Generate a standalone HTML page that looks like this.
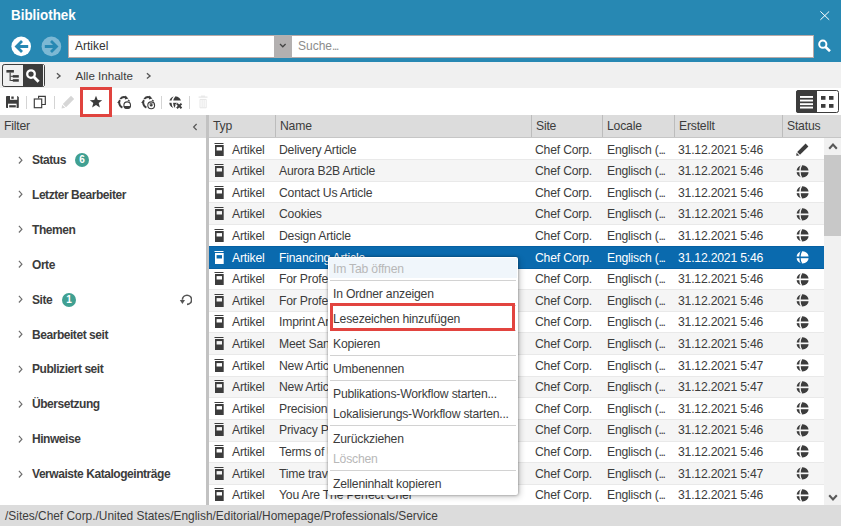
<!DOCTYPE html>
<html><head><meta charset="utf-8">
<style>
*{margin:0;padding:0;box-sizing:border-box}
html,body{width:841px;height:526px;overflow:hidden;background:#fff;font-family:"Liberation Sans",sans-serif;color:#3c3c3c}
.abs{position:absolute}
.ell{letter-spacing:-1.4px}
#hdr{position:absolute;left:0;top:0;width:841px;height:62px;background:#2788b3}
#title{position:absolute;left:11px;top:7px;font-size:13.4px;font-weight:bold;color:#fff;line-height:18px;transform:scaleY(1.07);transform-origin:0 14px}
#bc{position:absolute;left:0;top:62px;width:841px;height:26px;background:#f0f0f0}
#tb{position:absolute;left:0;top:88px;width:841px;height:27px;background:#fff}
#fhdr{position:absolute;left:0;top:115px;width:206px;height:23px;background:#dcdcdc}
#fhdr span{position:absolute;left:4px;top:3.5px;font-size:12.2px;letter-spacing:-0.2px;line-height:14px}
#split{position:absolute;left:206px;top:115px;width:3px;height:390px;background:#c2c2c2}
#ghdr{position:absolute;left:209px;top:115px;width:632px;height:23px;background:#dcdcdc;border-bottom:1px solid #c6c6c6}
.hc{position:absolute;top:0;height:22px;border-left:1px solid #bcbcbc}
.hc span{position:absolute;left:4px;top:3.5px;font-size:12.2px;letter-spacing:-0.2px;line-height:14px}
.row{position:absolute;left:209px;width:615px;height:21.6px;z-index:2}
.rbg{position:absolute;left:209px;width:615px;box-sizing:border-box}
.rsep{position:absolute;left:209px;width:615px;height:1px;background:#e9e9e9}
.c{position:absolute;top:4.5px;font-size:12.2px;letter-spacing:-0.2px;line-height:14px;white-space:nowrap}
.ti{display:block;margin-top:0px}
.gl{display:block;margin-top:0.5px}
.pc{display:block;margin-top:0}
#sb{position:absolute;left:824px;top:138px;width:17px;height:367px;background:#f1f1f1}
#thumb{position:absolute;left:824px;top:155px;width:17px;height:81px;background:#c8c8c8}
#status{position:absolute;left:0;top:505px;width:841px;height:21px;background:#dcdcdc}
#status span{position:absolute;left:5px;top:4px;font-size:11.9px;line-height:14px}
.fi{position:absolute;left:0;width:206px;height:0}
.chev{position:absolute;left:18px;top:-4px}
.fname{position:absolute;left:32px;top:-6.5px;font-size:12px;letter-spacing:-0.45px;font-weight:bold;line-height:14px;white-space:nowrap}
.badge{position:absolute;top:-7px;width:14px;height:14px;border-radius:7px;background:#40a092;color:#fff;font-size:10px;font-weight:bold;line-height:14px;text-align:center}
#menu{position:absolute;z-index:10;left:328px;top:257px;width:190px;height:238px;background:#fff;border-radius:2px;box-shadow:0 0 3px rgba(0,0,0,0.45), 2px 2px 6px rgba(0,0,0,0.18)}
.mi .ell{letter-spacing:-0.3px}
.mi{position:absolute;left:0;width:190px;height:20px;padding-left:5px;padding-top:4px;font-size:12.2px;letter-spacing:-0.2px;line-height:14px;white-space:nowrap}
.msep{position:absolute;left:2px;width:186px;height:1px;background:#d2d2d2}
#redmenu{position:absolute;z-index:11;left:330px;top:303px;width:185px;height:28px;border:3px solid #e2443f}
#redstar{position:absolute;z-index:5;left:80px;top:87px;width:32px;height:30px;border:3px solid #e0433e}
.sep{position:absolute;top:96px;width:1px;height:13px;background:#d4d4d4}
</style></head><body>
<div id="hdr"></div>
<div id="title">Bibliothek</div>
<svg class="abs" style="left:820px;top:10.5px" width="10" height="10" viewBox="0 0 10 10"><path d="M0.4 0.4 L9.2 8.8 M9.2 0.4 L0.4 8.8" stroke="#fff" stroke-width="1"/></svg>
<!-- nav -->
<svg class="abs" style="left:11px;top:36px" width="21" height="21" viewBox="0 0 21 21"><circle cx="10.2" cy="10.4" r="9.8" fill="#fff"/><path d="M17.2 10.5 H5.5 M11 5 L5.5 10.5 L11 16" stroke="#2788b3" stroke-width="2.8" fill="none"/></svg>
<svg class="abs" style="left:41px;top:36px" width="21" height="21" viewBox="0 0 21 21"><circle cx="10.4" cy="10.4" r="9.8" fill="#7db8d4"/><path d="M3.8 10.5 H15.5 M10 5 L15.5 10.5 L10 16" stroke="#2788b3" stroke-width="2.8" fill="none"/></svg>
<div class="abs" style="left:68px;top:35px;width:206px;height:22.5px;background:#fff;border:1px solid #b9aaa8;border-right:none"></div>
<div class="abs" style="left:75px;top:38px;font-size:12px;line-height:16px;color:#333">Artikel</div>
<div class="abs" style="left:274px;top:35px;width:18px;height:22.5px;background:#b3b0b0"></div>
<svg class="abs" style="left:278.5px;top:42.5px" width="8" height="6" viewBox="0 0 8 6"><path d="M1 1 L3.8 3.8 L6.6 1" stroke="#444" stroke-width="1.25" fill="none"/></svg>
<div class="abs" style="left:292px;top:35px;width:522px;height:22.5px;background:#fff;border:1px solid #b9aaa8;border-left:none"></div>
<div class="abs" style="left:298px;top:38px;font-size:12px;line-height:16px;color:#8c8c8c">Suche<span class="ell">...</span></div>
<svg class="abs" style="left:817px;top:39px" width="15" height="13" viewBox="0 0 15 13"><circle cx="5.8" cy="5.2" r="3.6" stroke="#fff" stroke-width="2" fill="none"/><path d="M8.3 7.8 L13 12.2" stroke="#fff" stroke-width="2.6"/></svg>

<div id="bc"></div>
<!-- tree/search toggle -->
<div class="abs" style="left:2px;top:64px;width:43px;height:23px;border:1.1px solid #3c3c3c;border-radius:2.5px;background:#3c3c3c"></div>
<div class="abs" style="left:3.2px;top:65.1px;width:20px;height:20.8px;background:#f0f0f0;border-radius:1.5px 0 0 1.5px"></div>
<div class="abs" style="left:42.5px;top:65px;width:1px;height:21px;background:#f0f0f0"></div>
<svg class="abs" style="left:6px;top:70px" width="14" height="12" viewBox="0 0 14 12"><rect x="0.4" y="0" width="7.5" height="2.6" fill="#3c3c3c"/><rect x="3.6" y="2.5" width="1.1" height="8.5" fill="#3c3c3c"/><rect x="4.5" y="5.8" width="2.5" height="1" fill="#3c3c3c"/><rect x="4.5" y="10" width="2.5" height="1" fill="#3c3c3c"/><rect x="6.8" y="5.1" width="6" height="2.5" fill="#3c3c3c"/><rect x="6.8" y="9.2" width="6" height="2.5" fill="#3c3c3c"/></svg>
<svg class="abs" style="left:25px;top:68px" width="16" height="16" viewBox="0 0 16 16"><circle cx="6" cy="6.1" r="3.8" stroke="#fff" stroke-width="2.3" fill="none"/><path d="M8.7 8.8 L13.6 13.7" stroke="#fff" stroke-width="3"/></svg>
<svg class="abs" style="left:55.5px;top:72px" width="6" height="8" viewBox="0 0 6 8"><path d="M0.9 1.2 L4.1 3.9 L0.9 6.6" stroke="#555" stroke-width="1.3" fill="none"/></svg>
<div class="abs" style="left:75.5px;top:68px;font-size:11.6px;line-height:16px">Alle Inhalte</div>
<svg class="abs" style="left:146px;top:72px" width="6" height="8" viewBox="0 0 6 8"><path d="M0.9 1.2 L4.1 3.9 L0.9 6.6" stroke="#555" stroke-width="1.3" fill="none"/></svg>

<div id="tb"></div>
<!-- save -->
<svg class="abs" style="left:6px;top:96px" width="13" height="12" viewBox="0 0 13 12"><path d="M0.8 0 H11.6 L12.8 1.2 V11.2 Q12.8 12 12 12 H0.8 Q0 12 0 11.2 V0.8 Q0 0 0.8 0 Z" fill="#3c3c3c"/><rect x="4" y="0" width="7.2" height="3.8" fill="#fff"/><rect x="5.3" y="0.5" width="2.4" height="2.3" fill="#3c3c3c"/><rect x="2" y="7.7" width="8.6" height="4.3" fill="#fff"/><rect x="3.2" y="9.2" width="6.6" height="2.2" fill="#3c3c3c"/></svg>
<div class="sep" style="left:26px"></div>
<svg class="abs" style="left:33px;top:95px" width="14" height="14" viewBox="0 0 14 14"><path d="M5.6 3.5 V1.3 H12.3 V9.5 H8.8" stroke="#3c3c3c" stroke-width="1.15" fill="none"/><rect x="1.3" y="4.0" width="7.4" height="8.7" stroke="#3c3c3c" stroke-width="1.15" fill="#fff"/></svg>
<div class="sep" style="left:54px"></div>
<svg class="abs" style="left:61px;top:95px" width="14" height="14" viewBox="0 0 14 14"><path d="M10 0.8 L13.2 4 L5 12.2 L1.8 9 Z" fill="#d6d6d6"/><path d="M1.2 9.8 L4.2 12.8 L0.6 13.4 Z" fill="#d6d6d6"/></svg>
<svg class="abs" style="left:89px;top:95px" width="14" height="14" viewBox="0 0 14 14"><path d="M7 0.8 L8.7 5.0 L13.2 5.2 L9.7 8.1 L10.9 12.6 L7 10.1 L3.1 12.6 L4.3 8.1 L0.8 5.2 L5.3 5.0 Z" fill="#3c3c3c"/></svg>
<!-- sync icons -->
<svg class="abs" style="left:114px;top:93px" width="20" height="18" viewBox="0 0 20 18"><path d="M6.2 6.0 A5.3 5.3 0 0 1 12.3 4.6" stroke="#3c3c3c" stroke-width="1.9" fill="none"/><path d="M11.2 2.6 L14.4 5.4 L10.9 6.6 Z" fill="#3c3c3c"/><path d="M5.9 7.0 A5.4 5.4 0 0 0 8.4 14.6" stroke="#3c3c3c" stroke-width="1.9" fill="none"/><path d="M3.1 9.4 L5.6 7.4 L6.2 11.2 Z" fill="#3c3c3c"/><path d="M13.9 6.9 L15.7 8.2" stroke="#3c3c3c" stroke-width="1.1"/><circle cx="13.2" cy="12.2" r="3.3" stroke="#3c3c3c" stroke-width="1.1" fill="#fff"/><path d="M9.6 12.9 H16.8 A3.7 3.7 0 0 1 9.6 12.9 Z" fill="#3c3c3c"/></svg>
<svg class="abs" style="left:138px;top:93px" width="20" height="18" viewBox="0 0 20 18"><path d="M6.2 6.0 A5.3 5.3 0 0 1 12.3 4.6" stroke="#3c3c3c" stroke-width="1.9" fill="none"/><path d="M11.2 2.6 L14.4 5.4 L10.9 6.6 Z" fill="#3c3c3c"/><path d="M5.9 7.0 A5.4 5.4 0 0 0 8.4 14.6" stroke="#3c3c3c" stroke-width="1.9" fill="none"/><path d="M3.1 9.4 L5.6 7.4 L6.2 11.2 Z" fill="#3c3c3c"/><path d="M13.9 6.9 L15.7 8.2" stroke="#3c3c3c" stroke-width="1.1"/><circle cx="13.2" cy="12.3" r="3.4" stroke="#3c3c3c" stroke-width="1.1" fill="#fff"/><circle cx="13.2" cy="12.3" r="1.3" fill="#3c3c3c"/><path d="M11.4 11.2 A2.1 2.1 0 0 1 15 11.6" stroke="#3c3c3c" stroke-width="0.9" fill="none"/></svg>
<div class="sep" style="left:161px"></div>
<svg class="abs" style="left:165px;top:93px" width="20" height="18" viewBox="0 0 20 18"><circle cx="10.2" cy="9.3" r="6" fill="#3c3c3c"/><rect x="3" y="7.5" width="15" height="2.3" fill="#fff"/><path d="M10 2.4 Q4.2 9.3 10 16.2" stroke="#fff" stroke-width="1.5" fill="none"/><path d="M11.6 10.3 L16.8 15.6 M16.8 10.3 L11.6 15.6" stroke="#fff" stroke-width="4.6"/><rect x="10.2" y="12.8" width="7" height="4" fill="#fff"/><path d="M11.9 10.6 L16.5 15.3 M16.5 10.6 L11.9 15.3" stroke="#3c3c3c" stroke-width="2"/></svg>
<div class="sep" style="left:189px"></div>
<svg class="abs" style="left:197px;top:95px" width="12" height="14" viewBox="0 0 12 14"><rect x="1.6" y="1.5" width="8.9" height="1.2" fill="#e6e6e6"/><rect x="4" y="0.6" width="4" height="1.2" fill="#e6e6e6"/><path d="M3 4.4 H9.2 V12.8 H3 Z M5.1 4.8 V12.4 M7.1 4.8 V12.4" stroke="#e6e6e6" stroke-width="1" fill="none"/></svg>
<!-- view toggle -->
<div class="abs" style="left:796px;top:90px;width:43px;height:23px;border:1.3px solid #3c3c3c;border-radius:2.5px;background:#fff"></div>
<div class="abs" style="left:796px;top:90px;width:21px;height:23px;background:#3c3c3c;border-radius:2.5px 0 0 2.5px"></div>
<svg class="abs" style="left:800px;top:95px" width="14" height="14" viewBox="0 0 14 14"><rect x="0" y="1" width="13" height="1.9" fill="#fff"/><rect x="0" y="4.6" width="13" height="1.9" fill="#fff"/><rect x="0" y="8.2" width="13" height="1.9" fill="#fff"/><rect x="0" y="11.6" width="13" height="1.9" fill="#fff"/></svg>
<svg class="abs" style="left:820px;top:95px" width="15" height="15" viewBox="0 0 15 15"><rect x="1" y="1" width="4.5" height="3.8" fill="#3c3c3c"/><rect x="9" y="1" width="4.5" height="3.8" fill="#3c3c3c"/><rect x="1" y="9" width="4.5" height="3.8" fill="#3c3c3c"/><rect x="9" y="9" width="4.5" height="3.8" fill="#3c3c3c"/></svg>

<div id="redstar"></div>

<div id="fhdr"><span>Filter</span><svg style="position:absolute;left:192px;top:8px" width="6" height="8" viewBox="0 0 6 8"><path d="M4.6 1 L1.6 4 L4.6 7" stroke="#555" stroke-width="1.15" fill="none"/></svg></div>
<div class="fi" style="top:159.5px"><svg class="chev" width="6" height="9" viewBox="0 0 6 9"><path d="M0.9 0.9 L3.9 4.2 L0.9 7.5" stroke="#6e6e6e" stroke-width="1.2" fill="none"/></svg><span class="fname">Status</span><span class="badge" style="left:75px">6</span></div><div class="fi" style="top:194.4px"><svg class="chev" width="6" height="9" viewBox="0 0 6 9"><path d="M0.9 0.9 L3.9 4.2 L0.9 7.5" stroke="#6e6e6e" stroke-width="1.2" fill="none"/></svg><span class="fname">Letzter Bearbeiter</span></div><div class="fi" style="top:229.3px"><svg class="chev" width="6" height="9" viewBox="0 0 6 9"><path d="M0.9 0.9 L3.9 4.2 L0.9 7.5" stroke="#6e6e6e" stroke-width="1.2" fill="none"/></svg><span class="fname">Themen</span></div><div class="fi" style="top:264.2px"><svg class="chev" width="6" height="9" viewBox="0 0 6 9"><path d="M0.9 0.9 L3.9 4.2 L0.9 7.5" stroke="#6e6e6e" stroke-width="1.2" fill="none"/></svg><span class="fname">Orte</span></div><div class="fi" style="top:299.1px"><svg class="chev" width="6" height="9" viewBox="0 0 6 9"><path d="M0.9 0.9 L3.9 4.2 L0.9 7.5" stroke="#6e6e6e" stroke-width="1.2" fill="none"/></svg><span class="fname">Site</span><span class="badge" style="left:62px;top:-6.5px">1</span><svg class="reset" width="16" height="16" viewBox="0 0 16 16" style="position:absolute;left:176px;top:-7px"><path d="M6.4 7.8 A4.6 4.6 0 1 1 11 12.4" stroke="#555" stroke-width="1.6" fill="none"/><path d="M3.8 8.1 L9 8.1 L6.4 11.9 Z" fill="#555"/></svg></div><div class="fi" style="top:334.0px"><svg class="chev" width="6" height="9" viewBox="0 0 6 9"><path d="M0.9 0.9 L3.9 4.2 L0.9 7.5" stroke="#6e6e6e" stroke-width="1.2" fill="none"/></svg><span class="fname">Bearbeitet seit</span></div><div class="fi" style="top:368.9px"><svg class="chev" width="6" height="9" viewBox="0 0 6 9"><path d="M0.9 0.9 L3.9 4.2 L0.9 7.5" stroke="#6e6e6e" stroke-width="1.2" fill="none"/></svg><span class="fname">Publiziert seit</span></div><div class="fi" style="top:403.8px"><svg class="chev" width="6" height="9" viewBox="0 0 6 9"><path d="M0.9 0.9 L3.9 4.2 L0.9 7.5" stroke="#6e6e6e" stroke-width="1.2" fill="none"/></svg><span class="fname">Übersetzung</span></div><div class="fi" style="top:438.7px"><svg class="chev" width="6" height="9" viewBox="0 0 6 9"><path d="M0.9 0.9 L3.9 4.2 L0.9 7.5" stroke="#6e6e6e" stroke-width="1.2" fill="none"/></svg><span class="fname">Hinweise</span></div><div class="fi" style="top:473.6px"><svg class="chev" width="6" height="9" viewBox="0 0 6 9"><path d="M0.9 0.9 L3.9 4.2 L0.9 7.5" stroke="#6e6e6e" stroke-width="1.2" fill="none"/></svg><span class="fname">Verwaiste Katalogeinträge</span></div>
<div id="split"></div>
<div id="ghdr">
<div class="hc" style="left:0;border-left:none"><span>Typ</span></div>
<div class="hc" style="left:66px"><span>Name</span></div>
<div class="hc" style="left:322px"><span>Site</span></div>
<div class="hc" style="left:393px"><span>Locale</span></div>
<div class="hc" style="left:465px"><span>Erstellt</span></div>
<div class="hc" style="left:573px"><span>Status</span></div>
</div>
<div class="rbg" style="top:138px;height:22px;background:#ffffff"></div><div class="rsep" style="top:159px"></div><div class="row" style="top:138.00px;color:#3c3c3c">
<div class="c" style="left:5px"><svg class="ti" width="10" height="14" viewBox="0 0 10 14"><rect x="0.5" y="0" width="9" height="1" fill="#3c3c3c"/><rect x="1" y="2" width="8.7" height="11" fill="#3c3c3c"/><rect x="2.6" y="4.1" width="5.4" height="3.4" fill="#ffffff"/></svg></div>
<div class="c" style="left:23px">Artikel</div>
<div class="c" style="left:70px">Delivery Article</div>
<div class="c" style="left:326px">Chef Corp.</div>
<div class="c" style="left:398px">Englisch (<span class="ell">...</span></div>
<div class="c" style="left:469px">31.12.2021 5:46</div>
<div class="c" style="left:587px"><svg class="pc" width="13" height="13" viewBox="0 0 13 13"><path d="M9.6 0.6 L12.4 3.4 L4 11.8 L1.2 9 Z" fill="#3c3c3c"/><path d="M0.6 9.7 L3.3 12.4 L0.2 12.8 Z" fill="#3c3c3c"/></svg></div>
</div><div class="rbg" style="top:160px;height:22px;background:#f5f5f5"></div><div class="rsep" style="top:181px"></div><div class="row" style="top:159.60px;color:#3c3c3c">
<div class="c" style="left:5px"><svg class="ti" width="10" height="14" viewBox="0 0 10 14"><rect x="0.5" y="0" width="9" height="1" fill="#3c3c3c"/><rect x="1" y="2" width="8.7" height="11" fill="#3c3c3c"/><rect x="2.6" y="4.1" width="5.4" height="3.4" fill="#f5f5f5"/></svg></div>
<div class="c" style="left:23px">Artikel</div>
<div class="c" style="left:70px">Aurora B2B Article</div>
<div class="c" style="left:326px">Chef Corp.</div>
<div class="c" style="left:398px">Englisch (<span class="ell">...</span></div>
<div class="c" style="left:469px">31.12.2021 5:46</div>
<div class="c" style="left:587px"><svg class="gl" width="13" height="13" viewBox="0 0 13 13"><circle cx="6.6" cy="6.4" r="6.05" fill="#3c3c3c"/><rect x="0" y="5.5" width="13" height="1.7" fill="#f5f5f5"/><path d="M5.6 0.1 C3.4 3 3.4 9.8 5.6 12.7" stroke="#f5f5f5" stroke-width="1.4" fill="none"/></svg></div>
</div><div class="rbg" style="top:182px;height:21px;background:#ffffff"></div><div class="rsep" style="top:202px"></div><div class="row" style="top:181.20px;color:#3c3c3c">
<div class="c" style="left:5px"><svg class="ti" width="10" height="14" viewBox="0 0 10 14"><rect x="0.5" y="0" width="9" height="1" fill="#3c3c3c"/><rect x="1" y="2" width="8.7" height="11" fill="#3c3c3c"/><rect x="2.6" y="4.1" width="5.4" height="3.4" fill="#ffffff"/></svg></div>
<div class="c" style="left:23px">Artikel</div>
<div class="c" style="left:70px">Contact Us Article</div>
<div class="c" style="left:326px">Chef Corp.</div>
<div class="c" style="left:398px">Englisch (<span class="ell">...</span></div>
<div class="c" style="left:469px">31.12.2021 5:46</div>
<div class="c" style="left:587px"><svg class="gl" width="13" height="13" viewBox="0 0 13 13"><circle cx="6.6" cy="6.4" r="6.05" fill="#3c3c3c"/><rect x="0" y="5.5" width="13" height="1.7" fill="#ffffff"/><path d="M5.6 0.1 C3.4 3 3.4 9.8 5.6 12.7" stroke="#ffffff" stroke-width="1.4" fill="none"/></svg></div>
</div><div class="rbg" style="top:203px;height:22px;background:#f5f5f5"></div><div class="rsep" style="top:224px"></div><div class="row" style="top:202.80px;color:#3c3c3c">
<div class="c" style="left:5px"><svg class="ti" width="10" height="14" viewBox="0 0 10 14"><rect x="0.5" y="0" width="9" height="1" fill="#3c3c3c"/><rect x="1" y="2" width="8.7" height="11" fill="#3c3c3c"/><rect x="2.6" y="4.1" width="5.4" height="3.4" fill="#f5f5f5"/></svg></div>
<div class="c" style="left:23px">Artikel</div>
<div class="c" style="left:70px">Cookies</div>
<div class="c" style="left:326px">Chef Corp.</div>
<div class="c" style="left:398px">Englisch (<span class="ell">...</span></div>
<div class="c" style="left:469px">31.12.2021 5:46</div>
<div class="c" style="left:587px"><svg class="gl" width="13" height="13" viewBox="0 0 13 13"><circle cx="6.6" cy="6.4" r="6.05" fill="#3c3c3c"/><rect x="0" y="5.5" width="13" height="1.7" fill="#f5f5f5"/><path d="M5.6 0.1 C3.4 3 3.4 9.8 5.6 12.7" stroke="#f5f5f5" stroke-width="1.4" fill="none"/></svg></div>
</div><div class="rbg" style="top:225px;height:22px;background:#ffffff"></div><div class="row" style="top:224.40px;color:#3c3c3c">
<div class="c" style="left:5px"><svg class="ti" width="10" height="14" viewBox="0 0 10 14"><rect x="0.5" y="0" width="9" height="1" fill="#3c3c3c"/><rect x="1" y="2" width="8.7" height="11" fill="#3c3c3c"/><rect x="2.6" y="4.1" width="5.4" height="3.4" fill="#ffffff"/></svg></div>
<div class="c" style="left:23px">Artikel</div>
<div class="c" style="left:70px">Design Article</div>
<div class="c" style="left:326px">Chef Corp.</div>
<div class="c" style="left:398px">Englisch (<span class="ell">...</span></div>
<div class="c" style="left:469px">31.12.2021 5:46</div>
<div class="c" style="left:587px"><svg class="gl" width="13" height="13" viewBox="0 0 13 13"><circle cx="6.6" cy="6.4" r="6.05" fill="#3c3c3c"/><rect x="0" y="5.5" width="13" height="1.7" fill="#ffffff"/><path d="M5.6 0.1 C3.4 3 3.4 9.8 5.6 12.7" stroke="#ffffff" stroke-width="1.4" fill="none"/></svg></div>
</div><div class="rbg" style="top:246px;height:23px;background:#0a6aae;border-top:1px solid #0660a2;border-bottom:1px solid #0660a2;z-index:1"></div><div class="row" style="top:246.00px;color:#ffffff">
<div class="c" style="left:5px"><svg class="ti" width="10" height="14" viewBox="0 0 10 14"><rect x="0.5" y="0" width="9" height="1" fill="#ffffff"/><rect x="1" y="2" width="8.7" height="11" fill="#ffffff"/><rect x="2.6" y="4.1" width="5.4" height="3.4" fill="#0a6aae"/></svg></div>
<div class="c" style="left:23px">Artikel</div>
<div class="c" style="left:70px">Financing Article</div>
<div class="c" style="left:326px">Chef Corp.</div>
<div class="c" style="left:398px">Englisch (<span class="ell">...</span></div>
<div class="c" style="left:469px">31.12.2021 5:46</div>
<div class="c" style="left:587px"><svg class="gl" width="13" height="13" viewBox="0 0 13 13"><circle cx="6.6" cy="6.4" r="6.05" fill="#ffffff"/><rect x="0" y="5.5" width="13" height="1.7" fill="#0a6aae"/><path d="M5.6 0.1 C3.4 3 3.4 9.8 5.6 12.7" stroke="#0a6aae" stroke-width="1.4" fill="none"/></svg></div>
</div><div class="rbg" style="top:268px;height:22px;background:#ffffff"></div><div class="rsep" style="top:289px"></div><div class="row" style="top:267.60px;color:#3c3c3c">
<div class="c" style="left:5px"><svg class="ti" width="10" height="14" viewBox="0 0 10 14"><rect x="0.5" y="0" width="9" height="1" fill="#3c3c3c"/><rect x="1" y="2" width="8.7" height="11" fill="#3c3c3c"/><rect x="2.6" y="4.1" width="5.4" height="3.4" fill="#ffffff"/></svg></div>
<div class="c" style="left:23px">Artikel</div>
<div class="c" style="left:70px">For Professionals</div>
<div class="c" style="left:326px">Chef Corp.</div>
<div class="c" style="left:398px">Englisch (<span class="ell">...</span></div>
<div class="c" style="left:469px">31.12.2021 5:46</div>
<div class="c" style="left:587px"><svg class="gl" width="13" height="13" viewBox="0 0 13 13"><circle cx="6.6" cy="6.4" r="6.05" fill="#3c3c3c"/><rect x="0" y="5.5" width="13" height="1.7" fill="#ffffff"/><path d="M5.6 0.1 C3.4 3 3.4 9.8 5.6 12.7" stroke="#ffffff" stroke-width="1.4" fill="none"/></svg></div>
</div><div class="rbg" style="top:290px;height:22px;background:#f5f5f5"></div><div class="rsep" style="top:311px"></div><div class="row" style="top:289.20px;color:#3c3c3c">
<div class="c" style="left:5px"><svg class="ti" width="10" height="14" viewBox="0 0 10 14"><rect x="0.5" y="0" width="9" height="1" fill="#3c3c3c"/><rect x="1" y="2" width="8.7" height="11" fill="#3c3c3c"/><rect x="2.6" y="4.1" width="5.4" height="3.4" fill="#f5f5f5"/></svg></div>
<div class="c" style="left:23px">Artikel</div>
<div class="c" style="left:70px">For Professionals Article</div>
<div class="c" style="left:326px">Chef Corp.</div>
<div class="c" style="left:398px">Englisch (<span class="ell">...</span></div>
<div class="c" style="left:469px">31.12.2021 5:46</div>
<div class="c" style="left:587px"><svg class="gl" width="13" height="13" viewBox="0 0 13 13"><circle cx="6.6" cy="6.4" r="6.05" fill="#3c3c3c"/><rect x="0" y="5.5" width="13" height="1.7" fill="#f5f5f5"/><path d="M5.6 0.1 C3.4 3 3.4 9.8 5.6 12.7" stroke="#f5f5f5" stroke-width="1.4" fill="none"/></svg></div>
</div><div class="rbg" style="top:312px;height:21px;background:#ffffff"></div><div class="rsep" style="top:332px"></div><div class="row" style="top:310.80px;color:#3c3c3c">
<div class="c" style="left:5px"><svg class="ti" width="10" height="14" viewBox="0 0 10 14"><rect x="0.5" y="0" width="9" height="1" fill="#3c3c3c"/><rect x="1" y="2" width="8.7" height="11" fill="#3c3c3c"/><rect x="2.6" y="4.1" width="5.4" height="3.4" fill="#ffffff"/></svg></div>
<div class="c" style="left:23px">Artikel</div>
<div class="c" style="left:70px">Imprint Article</div>
<div class="c" style="left:326px">Chef Corp.</div>
<div class="c" style="left:398px">Englisch (<span class="ell">...</span></div>
<div class="c" style="left:469px">31.12.2021 5:46</div>
<div class="c" style="left:587px"><svg class="gl" width="13" height="13" viewBox="0 0 13 13"><circle cx="6.6" cy="6.4" r="6.05" fill="#3c3c3c"/><rect x="0" y="5.5" width="13" height="1.7" fill="#ffffff"/><path d="M5.6 0.1 C3.4 3 3.4 9.8 5.6 12.7" stroke="#ffffff" stroke-width="1.4" fill="none"/></svg></div>
</div><div class="rbg" style="top:333px;height:22px;background:#f5f5f5"></div><div class="rsep" style="top:354px"></div><div class="row" style="top:332.40px;color:#3c3c3c">
<div class="c" style="left:5px"><svg class="ti" width="10" height="14" viewBox="0 0 10 14"><rect x="0.5" y="0" width="9" height="1" fill="#3c3c3c"/><rect x="1" y="2" width="8.7" height="11" fill="#3c3c3c"/><rect x="2.6" y="4.1" width="5.4" height="3.4" fill="#f5f5f5"/></svg></div>
<div class="c" style="left:23px">Artikel</div>
<div class="c" style="left:70px">Meet Sandra</div>
<div class="c" style="left:326px">Chef Corp.</div>
<div class="c" style="left:398px">Englisch (<span class="ell">...</span></div>
<div class="c" style="left:469px">31.12.2021 5:46</div>
<div class="c" style="left:587px"><svg class="gl" width="13" height="13" viewBox="0 0 13 13"><circle cx="6.6" cy="6.4" r="6.05" fill="#3c3c3c"/><rect x="0" y="5.5" width="13" height="1.7" fill="#f5f5f5"/><path d="M5.6 0.1 C3.4 3 3.4 9.8 5.6 12.7" stroke="#f5f5f5" stroke-width="1.4" fill="none"/></svg></div>
</div><div class="rbg" style="top:355px;height:22px;background:#ffffff"></div><div class="rsep" style="top:376px"></div><div class="row" style="top:354.00px;color:#3c3c3c">
<div class="c" style="left:5px"><svg class="ti" width="10" height="14" viewBox="0 0 10 14"><rect x="0.5" y="0" width="9" height="1" fill="#3c3c3c"/><rect x="1" y="2" width="8.7" height="11" fill="#3c3c3c"/><rect x="2.6" y="4.1" width="5.4" height="3.4" fill="#ffffff"/></svg></div>
<div class="c" style="left:23px">Artikel</div>
<div class="c" style="left:70px">New Article</div>
<div class="c" style="left:326px">Chef Corp.</div>
<div class="c" style="left:398px">Englisch (<span class="ell">...</span></div>
<div class="c" style="left:469px">31.12.2021 5:47</div>
<div class="c" style="left:587px"><svg class="gl" width="13" height="13" viewBox="0 0 13 13"><circle cx="6.6" cy="6.4" r="6.05" fill="#3c3c3c"/><rect x="0" y="5.5" width="13" height="1.7" fill="#ffffff"/><path d="M5.6 0.1 C3.4 3 3.4 9.8 5.6 12.7" stroke="#ffffff" stroke-width="1.4" fill="none"/></svg></div>
</div><div class="rbg" style="top:377px;height:21px;background:#f5f5f5"></div><div class="rsep" style="top:397px"></div><div class="row" style="top:375.60px;color:#3c3c3c">
<div class="c" style="left:5px"><svg class="ti" width="10" height="14" viewBox="0 0 10 14"><rect x="0.5" y="0" width="9" height="1" fill="#3c3c3c"/><rect x="1" y="2" width="8.7" height="11" fill="#3c3c3c"/><rect x="2.6" y="4.1" width="5.4" height="3.4" fill="#f5f5f5"/></svg></div>
<div class="c" style="left:23px">Artikel</div>
<div class="c" style="left:70px">New Article 2</div>
<div class="c" style="left:326px">Chef Corp.</div>
<div class="c" style="left:398px">Englisch (<span class="ell">...</span></div>
<div class="c" style="left:469px">31.12.2021 5:47</div>
<div class="c" style="left:587px"><svg class="gl" width="13" height="13" viewBox="0 0 13 13"><circle cx="6.6" cy="6.4" r="6.05" fill="#3c3c3c"/><rect x="0" y="5.5" width="13" height="1.7" fill="#f5f5f5"/><path d="M5.6 0.1 C3.4 3 3.4 9.8 5.6 12.7" stroke="#f5f5f5" stroke-width="1.4" fill="none"/></svg></div>
</div><div class="rbg" style="top:398px;height:22px;background:#ffffff"></div><div class="rsep" style="top:419px"></div><div class="row" style="top:397.20px;color:#3c3c3c">
<div class="c" style="left:5px"><svg class="ti" width="10" height="14" viewBox="0 0 10 14"><rect x="0.5" y="0" width="9" height="1" fill="#3c3c3c"/><rect x="1" y="2" width="8.7" height="11" fill="#3c3c3c"/><rect x="2.6" y="4.1" width="5.4" height="3.4" fill="#ffffff"/></svg></div>
<div class="c" style="left:23px">Artikel</div>
<div class="c" style="left:70px">Precision Article</div>
<div class="c" style="left:326px">Chef Corp.</div>
<div class="c" style="left:398px">Englisch (<span class="ell">...</span></div>
<div class="c" style="left:469px">31.12.2021 5:46</div>
<div class="c" style="left:587px"><svg class="gl" width="13" height="13" viewBox="0 0 13 13"><circle cx="6.6" cy="6.4" r="6.05" fill="#3c3c3c"/><rect x="0" y="5.5" width="13" height="1.7" fill="#ffffff"/><path d="M5.6 0.1 C3.4 3 3.4 9.8 5.6 12.7" stroke="#ffffff" stroke-width="1.4" fill="none"/></svg></div>
</div><div class="rbg" style="top:420px;height:22px;background:#f5f5f5"></div><div class="rsep" style="top:441px"></div><div class="row" style="top:418.80px;color:#3c3c3c">
<div class="c" style="left:5px"><svg class="ti" width="10" height="14" viewBox="0 0 10 14"><rect x="0.5" y="0" width="9" height="1" fill="#3c3c3c"/><rect x="1" y="2" width="8.7" height="11" fill="#3c3c3c"/><rect x="2.6" y="4.1" width="5.4" height="3.4" fill="#f5f5f5"/></svg></div>
<div class="c" style="left:23px">Artikel</div>
<div class="c" style="left:70px">Privacy Policy</div>
<div class="c" style="left:326px">Chef Corp.</div>
<div class="c" style="left:398px">Englisch (<span class="ell">...</span></div>
<div class="c" style="left:469px">31.12.2021 5:46</div>
<div class="c" style="left:587px"><svg class="gl" width="13" height="13" viewBox="0 0 13 13"><circle cx="6.6" cy="6.4" r="6.05" fill="#3c3c3c"/><rect x="0" y="5.5" width="13" height="1.7" fill="#f5f5f5"/><path d="M5.6 0.1 C3.4 3 3.4 9.8 5.6 12.7" stroke="#f5f5f5" stroke-width="1.4" fill="none"/></svg></div>
</div><div class="rbg" style="top:442px;height:21px;background:#ffffff"></div><div class="rsep" style="top:462px"></div><div class="row" style="top:440.40px;color:#3c3c3c">
<div class="c" style="left:5px"><svg class="ti" width="10" height="14" viewBox="0 0 10 14"><rect x="0.5" y="0" width="9" height="1" fill="#3c3c3c"/><rect x="1" y="2" width="8.7" height="11" fill="#3c3c3c"/><rect x="2.6" y="4.1" width="5.4" height="3.4" fill="#ffffff"/></svg></div>
<div class="c" style="left:23px">Artikel</div>
<div class="c" style="left:70px">Terms of Use</div>
<div class="c" style="left:326px">Chef Corp.</div>
<div class="c" style="left:398px">Englisch (<span class="ell">...</span></div>
<div class="c" style="left:469px">31.12.2021 5:46</div>
<div class="c" style="left:587px"><svg class="gl" width="13" height="13" viewBox="0 0 13 13"><circle cx="6.6" cy="6.4" r="6.05" fill="#3c3c3c"/><rect x="0" y="5.5" width="13" height="1.7" fill="#ffffff"/><path d="M5.6 0.1 C3.4 3 3.4 9.8 5.6 12.7" stroke="#ffffff" stroke-width="1.4" fill="none"/></svg></div>
</div><div class="rbg" style="top:463px;height:22px;background:#f5f5f5"></div><div class="rsep" style="top:484px"></div><div class="row" style="top:462.00px;color:#3c3c3c">
<div class="c" style="left:5px"><svg class="ti" width="10" height="14" viewBox="0 0 10 14"><rect x="0.5" y="0" width="9" height="1" fill="#3c3c3c"/><rect x="1" y="2" width="8.7" height="11" fill="#3c3c3c"/><rect x="2.6" y="4.1" width="5.4" height="3.4" fill="#f5f5f5"/></svg></div>
<div class="c" style="left:23px">Artikel</div>
<div class="c" style="left:70px">Time travel</div>
<div class="c" style="left:326px">Chef Corp.</div>
<div class="c" style="left:398px">Englisch (<span class="ell">...</span></div>
<div class="c" style="left:469px">31.12.2021 5:47</div>
<div class="c" style="left:587px"><svg class="gl" width="13" height="13" viewBox="0 0 13 13"><circle cx="6.6" cy="6.4" r="6.05" fill="#3c3c3c"/><rect x="0" y="5.5" width="13" height="1.7" fill="#f5f5f5"/><path d="M5.6 0.1 C3.4 3 3.4 9.8 5.6 12.7" stroke="#f5f5f5" stroke-width="1.4" fill="none"/></svg></div>
</div><div class="rbg" style="top:485px;height:22px;background:#ffffff"></div><div class="row" style="top:483.60px;color:#3c3c3c">
<div class="c" style="left:5px"><svg class="ti" width="10" height="14" viewBox="0 0 10 14"><rect x="0.5" y="0" width="9" height="1" fill="#3c3c3c"/><rect x="1" y="2" width="8.7" height="11" fill="#3c3c3c"/><rect x="2.6" y="4.1" width="5.4" height="3.4" fill="#ffffff"/></svg></div>
<div class="c" style="left:23px">Artikel</div>
<div class="c" style="left:70px">You Are The Perfect Chef</div>
<div class="c" style="left:326px">Chef Corp.</div>
<div class="c" style="left:398px">Englisch (<span class="ell">...</span></div>
<div class="c" style="left:469px">31.12.2021 5:46</div>
<div class="c" style="left:587px"><svg class="gl" width="13" height="13" viewBox="0 0 13 13"><circle cx="6.6" cy="6.4" r="6.05" fill="#3c3c3c"/><rect x="0" y="5.5" width="13" height="1.7" fill="#ffffff"/><path d="M5.6 0.1 C3.4 3 3.4 9.8 5.6 12.7" stroke="#ffffff" stroke-width="1.4" fill="none"/></svg></div>
</div>
<div id="sb"></div>
<div id="thumb"></div>
<svg class="abs" style="left:827.5px;top:141.5px" width="10" height="9" viewBox="0 0 10 9"><path d="M1.2 6.8 L5 2.6 L8.8 6.8" stroke="#595959" stroke-width="2.1" fill="none"/></svg>
<svg class="abs" style="left:827.5px;top:492.5px" width="10" height="9" viewBox="0 0 10 9"><path d="M1.2 2.2 L5 6.4 L8.8 2.2" stroke="#595959" stroke-width="2.1" fill="none"/></svg>
<div id="status"><span>/Sites/Chef Corp./United States/English/Editorial/Homepage/Professionals/Service</span></div>

<div id="menu"><div class="mi" style="top:1px;background:#f0f6fb;left:1px;width:188px;padding-left:4px;color:#b8b8b8;">Im Tab öffnen</div><div class="msep" style="top:23.0px"></div><div class="mi" style="top:26px;">In Ordner anzeigen</div><div class="msep" style="top:48.0px"></div><div class="mi" style="top:51px;">Lesezeichen hinzufügen</div><div class="msep" style="top:73.0px"></div><div class="mi" style="top:76px;">Kopieren</div><div class="msep" style="top:98.0px"></div><div class="mi" style="top:101px;">Umbenennen</div><div class="msep" style="top:123.0px"></div><div class="mi" style="top:126px;">Publikations-Workflow starten<span class="ell">...</span></div><div class="mi" style="top:146px;">Lokalisierungs-Workflow starten<span class="ell">...</span></div><div class="msep" style="top:168.0px"></div><div class="mi" style="top:171px;">Zurückziehen</div><div class="mi" style="top:191px;color:#b8b8b8;">Löschen</div><div class="msep" style="top:213.0px"></div><div class="mi" style="top:216px;">Zelleninhalt kopieren</div></div>
<div id="redmenu"></div>
</body></html>
